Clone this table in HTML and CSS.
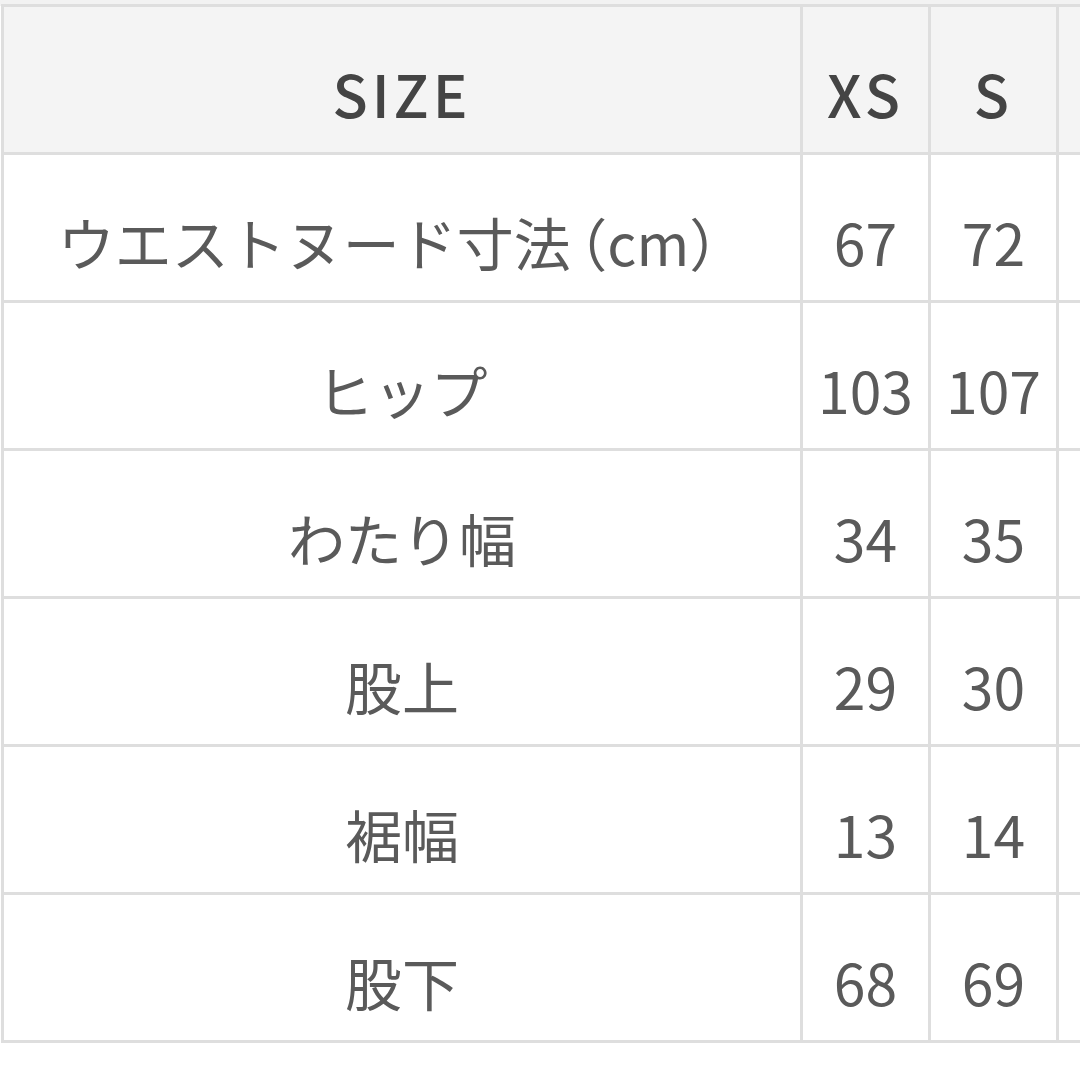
FILE: index.html
```html
<!DOCTYPE html>
<html lang="ja">
<head>
<meta charset="utf-8">
<link rel="stylesheet" href="styles.css">
</head>
<body>
<div class="wrap">
<table class="size-table">
  <colgroup>
    <col class="c-label"><col class="c-num"><col class="c-num"><col class="c-num">
  </colgroup>
  <thead>
    <tr><th>SIZE</th><th>XS</th><th>S</th><th></th></tr>
  </thead>
  <tbody>
    <tr><td>ウエストヌード寸法<span class="paren">（</span>cm）</td><td>67</td><td>72</td><td></td></tr>
    <tr><td>ヒップ</td><td>103</td><td>107</td><td></td></tr>
    <tr><td>わたり幅</td><td>34</td><td>35</td><td></td></tr>
    <tr><td>股上</td><td>29</td><td>30</td><td></td></tr>
    <tr><td>裾幅</td><td>13</td><td>14</td><td></td></tr>
    <tr><td>股下</td><td>68</td><td>69</td><td></td></tr>
  </tbody>
</table>
</div>
</body>
</html>
```
FILE: styles.css
```css
html, body {
  margin: 0;
  padding: 0;
  background: #ffffff;
  overflow: hidden;
}
body {
  width: 1080px;
  height: 1080px;
  font-family: "Noto Sans CJK JP", "Noto Sans", sans-serif;
  color: #555555;
}
.wrap {
  padding: 4px 0 0 1px;
  background: linear-gradient(#f2f2f2 0 6px, #ffffff 6px);
}
.size-table {
  border-collapse: collapse;
  table-layout: fixed;
  width: 1184px;
  border: 3px solid #dedede;
}
.c-label { width: 799px; }
.c-num { width: 128px; }
.size-table th,
.size-table td {
  border: 3px solid #dedede;
  height: 148px;
  padding: 26px 0 0 0;
  box-sizing: border-box;
  text-align: center;
  vertical-align: middle;
  white-space: nowrap;
  overflow: hidden;
}
.size-table th {
  background: #f4f4f4;
  font-size: 58px;
  font-weight: 500;
  letter-spacing: 4px;
  color: #444444;
}
.size-table td {
  font-size: 57px;
  font-weight: 400;
  color: #5a5a5a;
}
.paren {
  font-feature-settings: "halt" 1;
  margin-left: 8px;
}
```
